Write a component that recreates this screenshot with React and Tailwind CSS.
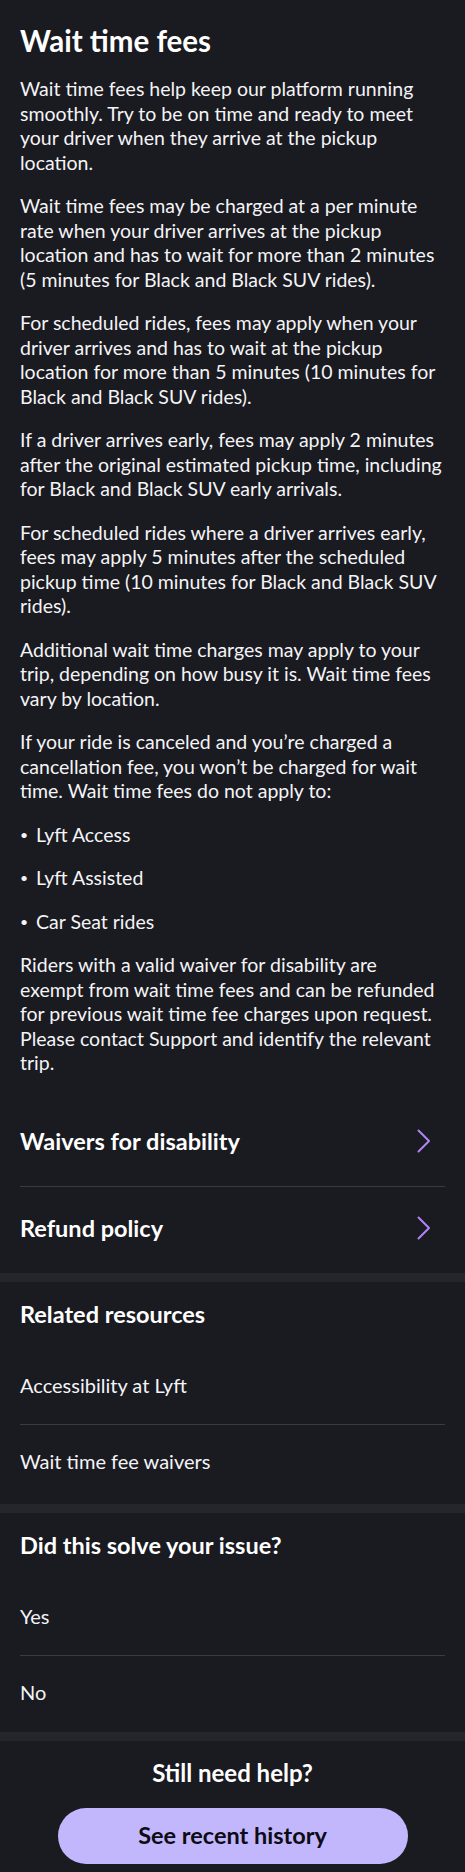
import React from "react";

const FONT = { fontFamily: "Lato, 'Open Sans', Arial, sans-serif" };

function Chevron() {
  return (
    <svg width="14" height="24" viewBox="0 0 14 24" fill="none" className="shrink-0">
      <path d="M1.5 1.5 L12 12 L1.5 22.5" stroke="#b084f5" strokeWidth="2" strokeLinecap="round" strokeLinejoin="round" />
    </svg>
  );
}

function Band() {
  return <div className="h-[9px] bg-[#25262b]" />;
}

function Divider() {
  return <div className="h-px bg-[#3a3b40]" />;
}

function Item({ children }) {
  return <div className="pt-[24px] pb-[27px] text-[20px] leading-[24.5px] text-[#f4f4f6]">{children}</div>;
}

export default function App() {
  const paras = [
    "Wait time fees help keep our platform running smoothly. Try to be on time and ready to meet your driver when they arrive at the pickup location.",
    "Wait time fees may be charged at a per minute rate when your driver arrives at the pickup location and has to wait for more than 2 minutes (5 minutes for Black and Black SUV rides).",
    "For scheduled rides, fees may apply when your driver arrives and has to wait at the pickup location for more than 5 minutes (10 minutes for Black and Black SUV rides).",
    "If a driver arrives early, fees may apply 2 minutes after the original estimated pickup time, including for Black and Black SUV early arrivals.",
    "For scheduled rides where a driver arrives early, fees may apply 5 minutes after the scheduled pickup time (10 minutes for Black and Black SUV rides).",
    "Additional wait time charges may apply to your trip, depending on how busy it is. Wait time fees vary by location.",
    "If your ride is canceled and you\u2019re charged a cancellation fee, you won\u2019t be charged for wait time. Wait time fees do not apply to:",
  ];
  const bullets = ["Lyft Access", "Lyft Assisted", "Car Seat rides"];
  return (
    <div className="w-[465px] min-h-[1872px] bg-[#1a1a21] text-white" style={FONT}>
      <div className="px-5 pt-6 pb-[23px]">
        <h1 className="text-[29.5px] leading-[34px] font-bold text-white">Wait time fees</h1>
        <div className="mt-[19px] flex flex-col gap-[19px] text-[19.5px] leading-[24.5px] text-[#f4f4f6]">
          {paras.map((p, i) => (
            <p key={i}>{p}</p>
          ))}
          {bullets.map((b) => (
            <div key={b} className="flex">
              <span className="w-4 shrink-0 text-[14px]">•</span>
              <span>{b}</span>
            </div>
          ))}
          <p>
            Riders with a valid waiver for disability are exempt from wait time fees and can be refunded for previous wait time fee charges upon request. Please contact Support and identify the relevant trip.
          </p>
        </div>
      </div>

      <div className="px-5">
        <div className="flex items-center justify-between pt-[28px] pb-[31px] pr-[14px]">
          <span className="text-[23.5px] leading-[28px] font-bold">Waivers for disability</span>
          <Chevron />
        </div>
        <Divider />
        <div className="flex items-center justify-between pt-[27px] pb-[31px] pr-[14px]">
          <span className="text-[23.5px] leading-[28px] font-bold">Refund policy</span>
          <Chevron />
        </div>
      </div>

      <Band />

      <div className="px-5 pt-[18px] pb-[3px]">
        <h2 className="text-[23.5px] leading-[28px] font-bold mb-[21px]">Related resources</h2>
        <Item>Accessibility at Lyft</Item>
        <Divider />
        <Item>Wait time fee waivers</Item>
      </div>

      <Band />

      <div className="px-5 pt-[18px]">
        <h2 className="text-[23.5px] leading-[28px] font-bold mb-[21px]">Did this solve your issue?</h2>
        <Item>Yes</Item>
        <Divider />
        <Item>No</Item>
      </div>

      <Band />

      <div className="flex flex-col items-center pt-[18px] pb-[7px]">
        <h2 className="text-[24px] leading-[28px] font-bold">Still need help?</h2>
        <button className="mt-[21px] w-[350px] h-[56px] rounded-full bg-[#c2b6fc] text-[#0d0c14] text-[23.5px] font-bold">
          See recent history
        </button>
      </div>
    </div>
  );
}
